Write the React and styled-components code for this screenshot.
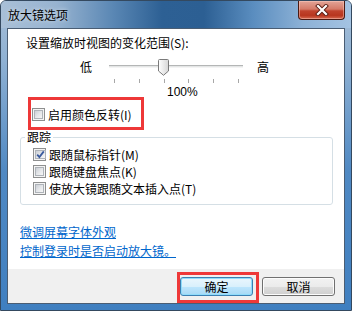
import React from "react";
import styled, { createGlobalStyle } from "styled-components";

const Global = createGlobalStyle`
  html, body { margin: 0; padding: 0; background: #fff; }
  body {
    font-family: "Noto Sans CJK SC", "Liberation Sans", sans-serif;
    font-size: 12px;
    color: #000;
  }
  * { box-sizing: border-box; }
`;

const Window = styled.div`
  width: 352px;
  height: 311px;
  display: flex;
  flex-direction: column;
  border: 1px solid #34495f;
  border-radius: 6px 6px 0 0;
  overflow: hidden;
  background: linear-gradient(180deg, #a7bfd7 0px, #8fb1d3 60px, #5089c3 170px, #3f7fc0 100%);
`;

const TitleBar = styled.div`
  height: 27px;
  flex: none;
  display: flex;
  justify-content: space-between;
  align-items: flex-start;
  padding-left: 7px;
  background: linear-gradient(90deg, #a9c0d7 0%, #97b3d0 16%, #5a87b4 32%, #2d6094 46%, #2c5f93 58%, #5a8dbf 72%, #8cb1d6 86%, #a4c3e2 100%);
`;

const Title = styled.div`
  margin-top: 7px;
  line-height: 14px;
  font-size: 12px;
  color: #000;
  text-shadow: 0 0 4px rgba(255, 255, 255, 0.7);
`;

const CloseButton = styled.div`
  width: 47px;
  height: 19px;
  margin-right: 6px;
  border: 1px solid #4b1a12;
  border-top: none;
  border-radius: 0 0 4px 4px;
  display: flex;
  align-items: center;
  justify-content: center;
  background: linear-gradient(180deg, #e3a497 0%, #d57a68 45%, #c0432d 55%, #b8361f 80%, #d66a50 100%);
  box-shadow: inset 0 0 0 1px rgba(255, 210, 200, 0.45);
`;

const Client = styled.div`
  flex: 1;
  margin: 0 6px 6px 6px;
  border: 1px solid #4a5d73;
  display: flex;
  flex-direction: column;
  background: #fff;
`;

const Body = styled.div`
  flex: 1;
  padding: 7px 0 0 12px;
  display: flex;
  flex-direction: column;
  align-items: flex-start;
`;

const Heading = styled.div`
  margin-left: 6px;
  line-height: 14px;
  height: 14px;
  white-space: nowrap;
`;

const SliderRow = styled.div`
  margin: 9px 0 0 60px;
  height: 24px;
  display: flex;
  align-items: flex-start;
`;

const SideLabel = styled.span`
  line-height: 14px;
  margin-top: 1px;
  margin-left: ${(p) => p.$ml || 0}px;
`;

const Track = styled.div`
  position: relative;
  width: 134px;
  height: 24px;
  margin-left: 17px;
  display: flex;
  flex-direction: column;
`;

const Groove = styled.div`
  margin-top: 6px;
  height: 3px;
  background: #e4e6e6;
  border-top: 1px solid #b4b6b6;
  border-bottom: 1px solid #f4f4f4;
`;

const Ticks = styled.div`
  margin-top: 11px;
  padding: 0 4px 0 5px;
  display: flex;
  justify-content: space-between;
`;

const Tick = styled.span`
  width: 1px;
  height: 4px;
  background: #a7a7a7;
`;

const Thumb = styled.svg`
  position: absolute;
  left: 49px;
  top: 0;
`;

const Percent = styled.div`
  margin: 4px 0 0 147px;
  line-height: 11px;
  height: 11px;
  font-family: "Liberation Sans", sans-serif;
  font-size: 12px;
`;

const Highlight = styled.div`
  border: 3px solid #ee3838;
  display: flex;
  align-items: flex-start;
  width: ${(p) => p.$w}px;
  height: ${(p) => p.$h}px;
  margin: ${(p) => p.$m || 0};
  padding: ${(p) => p.$p || 0};
`;

const CheckRow = styled.label`
  display: flex;
  align-items: center;
  gap: 3px;
  height: 17px;
  line-height: 17px;
  white-space: nowrap;
  margin-left: ${(p) => p.$ml || 0}px;
`;

const Box = styled.span`
  width: 13px;
  height: 13px;
  flex: none;
  border: 1px solid #8e8f8f;
  background: #f4f4f4;
  padding: 1px;
  display: flex;
`;

const BoxInner = styled.span`
  flex: 1;
  border: 1px solid #aeb3b9;
  background: linear-gradient(135deg, #cbcfd5 0%, #e4e6e9 50%, #f6f6f6 100%);
  display: flex;
  align-items: center;
  justify-content: center;
`;

const Group = styled.fieldset`
  margin: 0;
  min-width: 0;
  width: 313px;
  border: 1px solid #d5dfe5;
  border-radius: 3px;
  padding: 2px 0 7px 6px;
`;

const Legend = styled.legend`
  padding: 0 2px;
  margin-left: -2px;
  line-height: 14px;
`;

const Links = styled.div`
  margin-top: 18px;
  display: flex;
  flex-direction: column;
  gap: 1px;
`;

const Link = styled.a`
  color: #0066cc;
  text-decoration: underline;
  line-height: 18px;
  cursor: pointer;
`;

const Footer = styled.div`
  height: 34px;
  flex: none;
  background: #f0f0f0;
  display: flex;
  justify-content: flex-end;
  align-items: flex-start;
  padding-right: 9px;
`;

const Button = styled.button`
  width: 73px;
  height: 19px;
  padding: 0;
  margin: ${(p) => p.$m || 0};
  font-family: "Noto Sans CJK SC", sans-serif;
  font-size: 12px;
  line-height: 17px;
  color: #000;
  border-radius: 3px;
  border: 1px solid ${(p) => (p.$primary ? "#3c7fb1" : "#707070")};
  background: ${(p) =>
    p.$primary
      ? "linear-gradient(180deg, #eaf6fd 0%, #d9f0fc 50%, #bee6fd 50%, #a7d9f5 100%)"
      : "linear-gradient(180deg, #f2f2f2 0%, #ebebeb 50%, #dddddd 50%, #cfcfcf 100%)"};
  box-shadow: inset 0 0 0 1px ${(p) => (p.$primary ? "#8fdcfb" : "#fcfcfc")};
`;

function Checkbox({ checked }) {
  return (
    <Box>
      <BoxInner>
        {checked && (
          <svg width="9" height="9" viewBox="0 0 9 9">
            <path d="M1.2 4.6 L3.4 7 L7.8 1.4" fill="none" stroke="#3a5b9e" strokeWidth="1.8" />
          </svg>
        )}
      </BoxInner>
    </Box>
  );
}

function CloseGlyph() {
  return (
    <svg width="14" height="12" viewBox="0 0 14 12">
      <path d="M3 2 L11 10 M11 2 L3 10" stroke="#5a1d14" strokeWidth="4" strokeLinecap="square" />
      <path d="M3 2 L11 10 M11 2 L3 10" stroke="#ffffff" strokeWidth="2.2" strokeLinecap="square" />
    </svg>
  );
}

export default function App() {
  const ticks = [0, 1, 2, 3, 4, 5];
  return (
    <>
      <Global />
      <Window>
        <TitleBar>
          <Title>放大镜选项</Title>
          <CloseButton>
            <CloseGlyph />
          </CloseButton>
        </TitleBar>
        <Client>
          <Body>
            <Heading>设置缩放时视图的变化范围(S):</Heading>
            <SliderRow>
              <SideLabel>低</SideLabel>
              <Track>
                <Groove />
                <Ticks>
                  {ticks.map((t) => (
                    <Tick key={t} />
                  ))}
                </Ticks>
                <Thumb width="11" height="17" viewBox="0 0 11 17">
                  <defs>
                    <linearGradient id="tg" x1="0" y1="0" x2="1" y2="0">
                      <stop offset="0" stopColor="#ffffff" />
                      <stop offset="1" stopColor="#d6d6d6" />
                    </linearGradient>
                  </defs>
                  <path
                    d="M1.5 0.5 H9.5 Q10.5 0.5 10.5 1.5 V12 L5.5 16.3 L0.5 12 V1.5 Q0.5 0.5 1.5 0.5 Z"
                    fill="url(#tg)"
                    stroke="#7a7a7a"
                  />
                </Thumb>
              </Track>
              <SideLabel $ml={14}>高</SideLabel>
            </SliderRow>
            <Percent>100%</Percent>
            <Highlight $w={116} $h={33} $m="-1px 0 0 8px" $p="6px 0 0 1px">
              <CheckRow>
                <Checkbox />
                启用颜色反转(I)
              </CheckRow>
            </Highlight>
            <Group>
              <Legend>跟踪</Legend>
              <CheckRow $ml={6}>
                <Checkbox checked />
                跟随鼠标指针(M)
              </CheckRow>
              <CheckRow $ml={6}>
                <Checkbox />
                跟随键盘焦点(K)
              </CheckRow>
              <CheckRow $ml={6}>
                <Checkbox />
                使放大镜跟随文本插入点(T)
              </CheckRow>
            </Group>
            <Links>
              <Link>微调屏幕字体外观</Link>
              <Link>控制登录时是否启动放大镜。</Link>
            </Links>
          </Body>
          <Footer>
            <Highlight $w={82} $h={31} $m="3px 0 0 0" $p="2px 3px 4px 0">
              <Button $primary>确定</Button>
            </Highlight>
            <Button $m="8px 0 0 3px">取消</Button>
          </Footer>
        </Client>
      </Window>
    </>
  );
}
